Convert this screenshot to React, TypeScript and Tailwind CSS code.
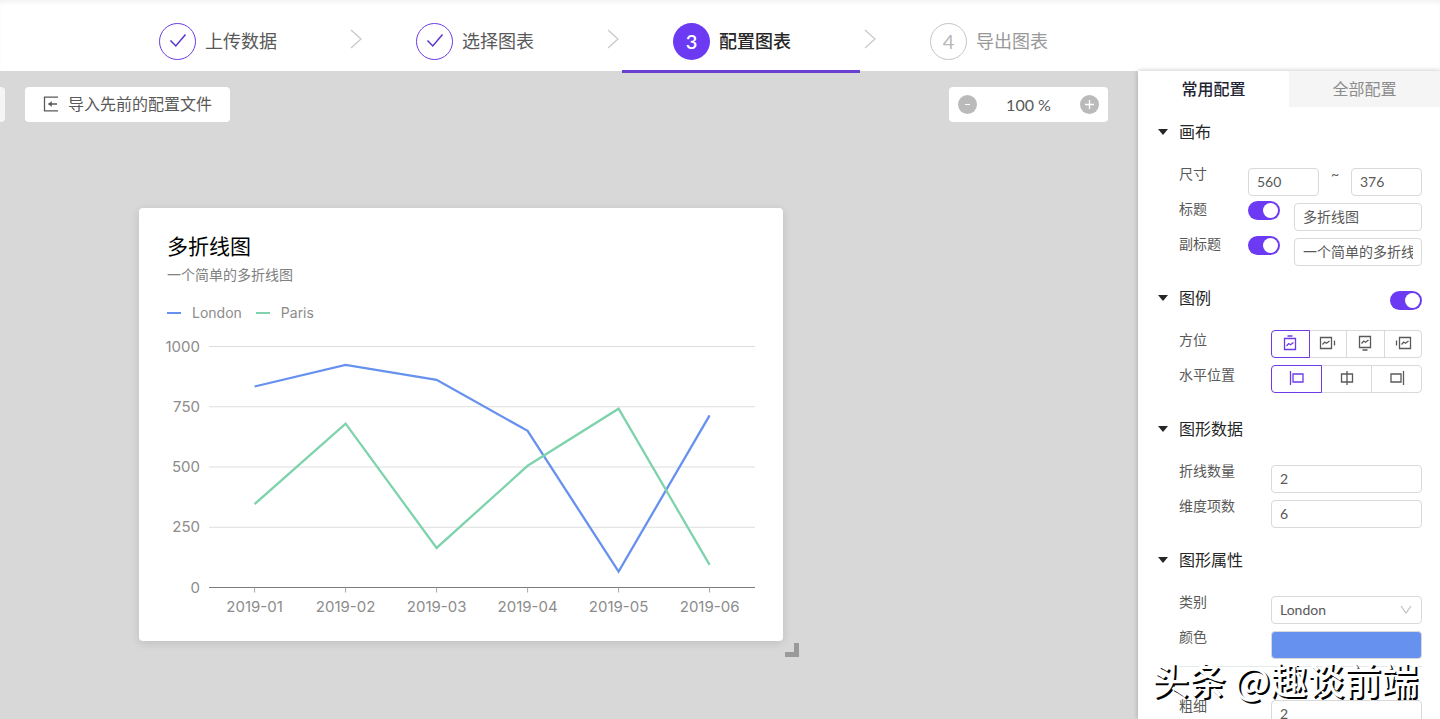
import React from 'react';

const months = ['2019-01', '2019-02', '2019-03', '2019-04', '2019-05', '2019-06'];
const ticks = [1000, 750, 500, 250, 0];

const series = [
  { name: 'London', color: '#6791ee', values: [834, 924, 862, 650, 66, 714] },
  { name: 'Paris', color: '#7ed3ac', values: [346, 680, 164, 505, 742, 94] },
];

const steps = [
  { label: '上传数据', state: 'done' },
  { label: '选择图表', state: 'done' },
  { label: '配置图表', state: 'active' },
  { label: '导出图表', state: 'todo' },
];

const StepBadge: React.FC<{ index: number; state: string }> = ({ index, state }) => {
  const base = 'flex h-[37px] w-[37px] shrink-0 items-center justify-center rounded-full pb-[2px] text-[20px]';
  if (state === 'done') {
    return (
      <span className={`${base} border border-[#6b3be6]`}>
        <svg width="18" height="16" viewBox="0 0 18 16" fill="none" stroke="#5a35c8" strokeWidth="1.5">
          <path d="M1.5 7.5 6.8 13 16.5 1.5" />
        </svg>
      </span>
    );
  }
  if (state === 'active') {
    return <span className={`${base} bg-[#6c3af2] font-semibold text-white`}>{index}</span>;
  }
  return <span className={`${base} border border-[#c4c4c4] text-[#b8b8b8]`}>{index}</span>;
};

const StepBar: React.FC = () => (
  <header className="h-[71px] shrink-0 bg-white shadow-[inset_0_4px_4px_-2px_#f0f0f0]">
    <ol className="flex h-[73px] pl-[108px]">
      {steps.map((step, i) => (
        <React.Fragment key={step.label}>
          {i > 0 && (
            <li aria-hidden="true" className="flex w-[19px] justify-center pt-[29px]">
              <svg width="12" height="20" viewBox="0 0 12 20" fill="none" stroke="#c8c8c8" strokeWidth="1.2">
                <path d="M1 1 11 10 1 19" />
              </svg>
            </li>
          )}
          <li
            className={`relative z-10 flex w-[238px] items-start border-b-[3px] pl-[51px] pt-[23px] ${
              step.state === 'active' ? 'border-[#6b40d0]' : 'border-transparent'
            }`}
          >
            <a href="#step" className="flex items-center gap-[9px] text-[18px]">
              <StepBadge index={i + 1} state={step.state} />
              <span
                className={
                  step.state === 'active'
                    ? 'font-medium text-[#262626]'
                    : step.state === 'done'
                      ? 'text-[#595959]'
                      : 'text-[#999999]'
                }
              >
                {step.label}
              </span>
            </a>
          </li>
        </React.Fragment>
      ))}
    </ol>
  </header>
);

const Toolbar: React.FC = () => (
  <div className="flex h-[35px] items-stretch gap-5 pr-[30px]">
    <button type="button" aria-label="更多" className="w-[5px] rounded-r bg-[#f5f5f5]" />
    <button
      type="button"
      className="flex items-center gap-2 rounded bg-white pb-[2px] pl-[17px] pr-[18px] text-[16px] text-[#595959]"
    >
      <svg width="18" height="18" viewBox="0 0 18 18" fill="none" stroke="#595959" strokeWidth="1.3">
        <path d="M16 2.2H2.5v13.6H16M6.5 9H15" />
        <path d="M9.5 6.6 6.5 9l3 2.4z" fill="#595959" strokeWidth="0.5" />
      </svg>
      导入先前的配置文件
    </button>
    <div className="ml-auto flex w-[159px] items-center justify-between rounded bg-white px-[9px] text-[16px] text-[#595959]">
      <button
        type="button"
        aria-label="缩小"
        className="flex h-[19px] w-[19px] items-center justify-center rounded-full bg-[#bababa]"
      >
        <span className="h-px w-[5px] bg-white" />
      </button>
      <span>100 %</span>
      <button type="button" aria-label="放大" className="rounded-full bg-[#bababa]">
        <svg width="19" height="19" viewBox="0 0 19 19" stroke="#fff" strokeWidth="1.3">
          <path d="M9.5 5v9M5 9.5h9" />
        </svg>
      </button>
    </div>
  </div>
);

const x = (i: number) => 91.6 + i * 91;
const y = (value: number) => 249.5 - value * 0.241;

const LineChart: React.FC = () => (
  <svg
    viewBox="0 0 594 280"
    className="block w-full font-[Inter,sans-serif] text-[15px]"
    role="img"
    aria-label="多折线图"
  >
    {ticks.map((t) => (
      <g key={t}>
        <line x1="46" x2="592" y1={y(t)} y2={y(t)} stroke={t === 0 ? '#7a7a7a' : '#dedede'} strokeWidth="1.2" />
        <text x="37" y={y(t) + 5} textAnchor="end" fill="#8c8c8c">
          {t}
        </text>
      </g>
    ))}
    {months.map((m, i) => (
      <g key={m}>
        <line x1={x(i)} x2={x(i)} y1={y(0)} y2={y(0) + 5} stroke="#a6a6a6" />
        <text x={x(i)} y={y(0) + 24} textAnchor="middle" fill="#8c8c8c">
          {m}
        </text>
      </g>
    ))}
    {series.map((s) => (
      <polyline
        key={s.name}
        points={s.values.map((v, i) => `${x(i)},${y(v)}`).join(' ')}
        fill="none"
        stroke={s.color}
        strokeWidth="2.3"
      />
    ))}
  </svg>
);

const ChartCard: React.FC = () => (
  <div className="flex items-end">
    <section className="h-[433px] w-[644px] rounded bg-white pl-6 pr-[26px] pt-6 shadow-[0_2px_10px_rgba(0,0,0,0.12)]">
      <div className="pl-1">
        <h1 className="text-[21px] leading-[28px] text-black">多折线图</h1>
        <p className="mt-1 text-[14px] leading-[22px] text-[#808080]">一个简单的多折线图</p>
        <ul className="mt-4 flex gap-[14px] font-[Inter,sans-serif] text-[14px] leading-[22px] text-[#8c8c8c]">
          {series.map((s) => (
            <li key={s.name} className="flex items-center gap-[11px]">
              <span className="h-[2px] w-[14px]" style={{ backgroundColor: s.color }} />
              {s.name}
            </li>
          ))}
        </ul>
      </div>
      <div className="mt-[14px]">
        <LineChart />
      </div>
    </section>
    <span className="-mb-4 ml-[2px] h-[14px] w-[14px] cursor-nwse-resize border-b-[5px] border-r-[5px] border-[#9a9a9a]" />
  </div>
);

const Toggle: React.FC<{ label: string }> = ({ label }) => (
  <input
    type="checkbox"
    role="switch"
    aria-label={label}
    defaultChecked
    className="h-[19px] w-8 shrink-0 appearance-none rounded-full bg-[#c4c4c4] p-[2px] before:block before:h-[15px] before:w-[15px] before:rounded-full before:bg-white checked:bg-[#6c3af2] checked:before:ml-auto"
  />
);

const fieldClass =
  'h-7 min-w-0 rounded border border-[#d9d9d9] bg-white px-[8px] pb-[2px] text-[14px] text-[#595959] outline-none';

const Row: React.FC<{ label: string; htmlFor?: string; children: React.ReactNode }> = ({
  label,
  htmlFor,
  children,
}) => (
  <div className="flex h-[35px] items-start">
    <label htmlFor={htmlFor} className="w-[69px] shrink-0 text-[14px] leading-[22px] text-[#595959]">
      {label}
    </label>
    {children}
  </div>
);

const Section: React.FC<{ title: string; extra?: React.ReactNode; children: React.ReactNode }> = ({
  title,
  extra,
  children,
}) => (
  <section>
    <div className="flex h-[22px] items-center">
      <button type="button" className="flex items-center gap-[11px] text-[16px] leading-[22px] text-[#262626]">
        <svg width="10" height="6" viewBox="0 0 10 6" fill="#262626">
          <path d="M0 0h10L5 6z" />
        </svg>
        {title}
      </button>
      {extra}
    </div>
    <div className="pl-[21px] pt-5">{children}</div>
  </section>
);

const positions = [
  { label: '上', icon: 'M3.5 4.5h11v11h-11zM6.5 2h5M5.5 12l2.2-2.5 1.8 1.3L12.5 8.5' },
  { label: '右', icon: 'M1.5 3.5h11v11h-11zM15.5 6.5v5M3.5 10.5l2.2-2.5 1.8 1.3L10.5 7' },
  { label: '下', icon: 'M3.5 2.5h11v11h-11zM6.5 16h5M5.5 9.5l2.2-2.5 1.8 1.3L12.5 6' },
  { label: '左', icon: 'M5.5 3.5h11v11h-11zM2.5 6.5v5M7.5 10.5l2.2-2.5 1.8 1.3L14.5 7' },
];

const aligns = [
  { label: '左对齐', icon: 'M2.5 2v14M5 5h10v8H5z' },
  { label: '居中', icon: 'M3.5 5h11v8h-11zM9 2v14' },
  { label: '右对齐', icon: 'M3 5h10v8H3zM15.5 2v14' },
];

const IconGroup: React.FC<{ options: { label: string; icon: string }[] }> = ({ options }) => (
  <div className="ml-auto mt-px flex w-[151px]">
    {options.map((o, i) => (
      <button
        key={o.label}
        type="button"
        aria-label={o.label}
        className={`-ml-px flex h-7 flex-1 items-center justify-center border pb-[2px] first:ml-0 first:rounded-l last:rounded-r ${
          i === 0 ? 'z-10 border-[#6b3be6] text-[#6b3be6]' : 'border-[#d9d9d9] text-[#595959]'
        }`}
      >
        <svg width="18" height="18" viewBox="0 0 18 18" fill="none" stroke="currentColor" strokeWidth="1.3">
          <path d={o.icon} />
        </svg>
      </button>
    ))}
  </div>
);

const ConfigPanel: React.FC = () => (
  <aside className="z-10 w-[302px] shrink-0 overflow-hidden bg-white shadow-[0_0_5px_rgba(0,0,0,0.25)]">
    <div role="tablist" className="flex h-9 text-[16px]">
      <button type="button" role="tab" aria-selected="true" className="flex-1 pb-px font-medium text-[#1f2433]">
        常用配置
      </button>
      <button type="button" role="tab" aria-selected="false" className="flex-1 bg-[#f5f5f5] pb-px text-[#8c8c8c]">
        全部配置
      </button>
    </div>
    <div className="flex flex-col gap-[19px] pl-5 pr-[18px] pt-[14px]">
      <Section title="画布">
        <Row label="尺寸" htmlFor="width">
          <input id="width" defaultValue="560" className={`${fieldClass} mt-[5px] w-[71px]`} />
          <span className="flex-1 text-center text-[14px] leading-[22px] text-[#595959]">~</span>
          <input aria-label="高度" defaultValue="376" className={`${fieldClass} mt-[5px] w-[71px]`} />
        </Row>
        <Row label="标题" htmlFor="title">
          <span className="flex pt-[3px]">
            <Toggle label="显示标题" />
          </span>
          <input id="title" defaultValue="多折线图" className={`${fieldClass} ml-[14px] mt-[5px] flex-1`} />
        </Row>
        <Row label="副标题" htmlFor="subtitle">
          <span className="flex pt-[3px]">
            <Toggle label="显示副标题" />
          </span>
          <input id="subtitle" defaultValue="一个简单的多折线图" className={`${fieldClass} ml-[14px] mt-[5px] flex-1`} />
        </Row>
      </Section>
      <Section
        title="图例"
        extra={
          <span className="ml-auto flex pt-1">
            <Toggle label="显示图例" />
          </span>
        }
      >
        <Row label="方位">
          <IconGroup options={positions} />
        </Row>
        <Row label="水平位置">
          <IconGroup options={aligns} />
        </Row>
      </Section>
      <Section title="图形数据">
        <Row label="折线数量" htmlFor="lines">
          <input id="lines" defaultValue="2" className={`${fieldClass} ml-auto mt-[5px] w-[151px]`} />
        </Row>
        <Row label="维度项数" htmlFor="dims">
          <input id="dims" defaultValue="6" className={`${fieldClass} ml-auto mt-[5px] w-[151px]`} />
        </Row>
      </Section>
      <Section title="图形属性">
        <Row label="类别" htmlFor="category">
          <div className="relative ml-auto mt-[5px] flex w-[151px]">
            <select id="category" className={`${fieldClass} w-full appearance-none`}>
              <option>London</option>
              <option>Paris</option>
            </select>
            <svg
              className="pointer-events-none absolute right-[10px] top-[9px]"
              width="12"
              height="9"
              viewBox="0 0 12 9"
              fill="none"
              stroke="#bfbfbf"
              strokeWidth="1.2"
            >
              <path d="M1 1l5 7 5-7" />
            </svg>
          </div>
        </Row>
        <Row label="颜色">
          <button
            type="button"
            aria-label="颜色"
            className="ml-auto mt-[5px] h-7 w-[151px] rounded border border-[#d9d9d9] bg-[#6791ee]"
          />
        </Row>
        <hr className="mb-7 mt-[5px] border-[#e3eaea]" />
        <Row label="粗细" htmlFor="stroke">
          <input id="stroke" defaultValue="2" className={`${fieldClass} ml-auto mt-[5px] w-[151px]`} />
        </Row>
      </Section>
    </div>
  </aside>
);

const App: React.FC = () => (
  <div className="relative flex h-screen flex-col overflow-hidden bg-[#d8d8d8] font-[Lato,'Noto_Sans_CJK_SC',sans-serif]">
    <StepBar />
    <div className="flex min-h-0 flex-1">
      <main className="min-w-0 flex-1 pt-4">
        <Toolbar />
        <div className="pl-[139px] pt-[86px]">
          <ChartCard />
        </div>
      </main>
      <ConfigPanel />
    </div>
    <p className="pointer-events-none absolute bottom-[22px] right-[22px] z-20 font-['Noto_Sans_CJK_SC',sans-serif] text-[37px] font-medium leading-[36px] text-white [text-shadow:2px_2px_0_#000]">
      头条 @趣谈前端
    </p>
  </div>
);

export default App;
